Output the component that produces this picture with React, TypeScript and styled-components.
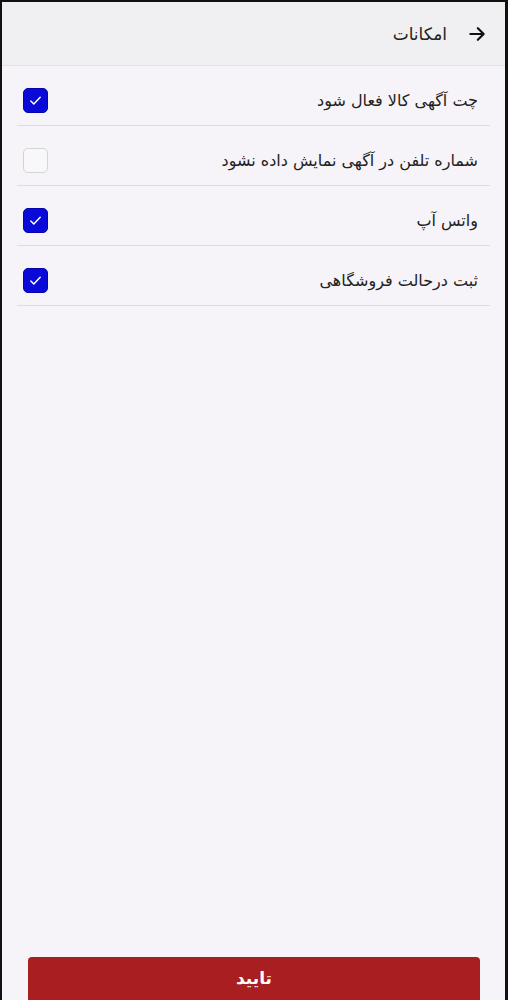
import { useState } from "react";
import styled, { createGlobalStyle } from "styled-components";

const GlobalStyle = createGlobalStyle`
  html, body {
    margin: 0;
    padding: 0;
    background: #111;
  }
  * {
    box-sizing: border-box;
  }
`;

const Screen = styled.div`
  display: flex;
  flex-direction: column;
  height: 1000px;
  margin: 2px 3px 0 2px;
  overflow: hidden;
  direction: rtl;
  background: #f6f4f8;
  font-family: "DejaVu Sans", "Noto Sans", sans-serif;
  color: #222;
`;

const Header = styled.header`
  display: flex;
  align-items: center;
  gap: 20px;
  height: 64px;
  padding: 0 18px 0 21px;
  background: #f0eff1;
  border-bottom: 1px solid #e4e2e6;
`;

const BackButton = styled.button`
  display: flex;
  align-items: center;
  justify-content: center;
  padding: 0;
  color: #111;
  background: transparent;
  border: none;
  cursor: pointer;
`;

const Title = styled.h1`
  margin: 0;
  font-size: 17px;
  font-weight: 400;
`;

const OptionsList = styled.ul`
  flex: 1;
  margin: 0;
  padding: 0 15px;
  list-style: none;
`;

const OptionItem = styled.li`
  display: flex;
  justify-content: space-between;
  align-items: center;
  height: 60px;
  padding: 10px 12px 0 6px;
  border-bottom: 1.5px solid #dedde0;
  cursor: pointer;
`;

const OptionLabel = styled.span`
  font-size: 16px;
`;

const CheckBox = styled.span<{ $checked: boolean }>`
  display: flex;
  align-items: center;
  justify-content: center;
  width: 25px;
  height: 25px;
  border-radius: 5px;
  background: ${(props) => (props.$checked ? "#0a0ad8" : "#f8f7f9")};
  border: 1.5px solid ${(props) => (props.$checked ? "#0505b0" : "#d4d3d6")};
`;

const Footer = styled.div`
  padding: 0 25px 0 26px;
`;

const ConfirmButton = styled.button`
  width: 100%;
  height: 55px;
  margin-bottom: -10px;
  padding-bottom: 14px;
  font-family: inherit;
  font-size: 17px;
  font-weight: 700;
  color: #fff;
  background: #a91e21;
  border: none;
  border-radius: 4px;
  cursor: pointer;
`;

const OPTIONS = [
  { id: "chat", label: "چت آگهی کالا فعال شود", checked: true },
  { id: "phone", label: "شماره تلفن در آگهی نمایش داده نشود", checked: false },
  { id: "whatsapp", label: "واتس آپ", checked: true },
  { id: "shop", label: "ثبت درحالت فروشگاهی", checked: true },
];

const App: React.FC = () => {
  const [options, setOptions] = useState(OPTIONS);

  const onToggle = (id: string) => {
    setOptions((prev) =>
      prev.map((item) =>
        item.id === id ? { ...item, checked: !item.checked } : item
      )
    );
  };

  return (
    <>
      <GlobalStyle />
      <Screen>
        <Header>
          <BackButton type="button">
            <svg width="20" height="20" viewBox="0 0 24 24" fill="none">
              <path
                d="M4 12h16M13 5l7 7-7 7"
                stroke="currentColor"
                strokeWidth="2.6"
                strokeLinecap="round"
                strokeLinejoin="round"
              />
            </svg>
          </BackButton>
          <Title>امکانات</Title>
        </Header>
        <OptionsList>
          {options.map((item) => (
            <OptionItem key={item.id} onClick={() => onToggle(item.id)}>
              <OptionLabel>{item.label}</OptionLabel>
              <CheckBox $checked={item.checked}>
                {item.checked && (
                  <svg width="15" height="15" viewBox="0 0 16 16" fill="none">
                    <path
                      d="M3 8.5l3.2 3.2L13 4.5"
                      stroke="#fff"
                      strokeWidth="1.6"
                      strokeLinecap="round"
                      strokeLinejoin="round"
                    />
                  </svg>
                )}
              </CheckBox>
            </OptionItem>
          ))}
        </OptionsList>
        <Footer>
          <ConfirmButton type="button">تایید</ConfirmButton>
        </Footer>
      </Screen>
    </>
  );
};

export default App;
